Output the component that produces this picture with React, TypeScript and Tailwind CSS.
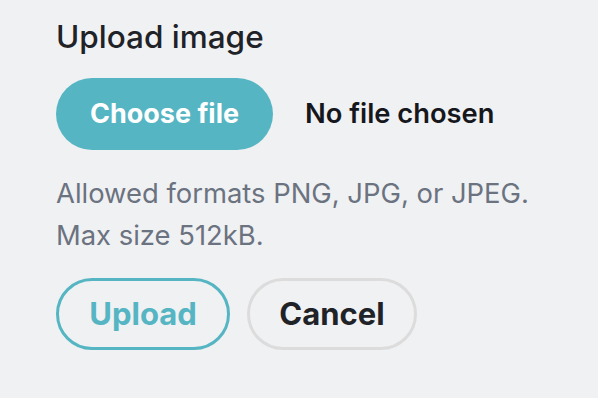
import React from "react";

export default function App() {
  return (
    <div className="w-[598px] h-[398px] bg-[#f0f1f3] overflow-hidden" style={{ fontFamily: "Inter, 'Noto Sans', sans-serif" }}>
      <div className="pl-[56px] pt-[19px]">
        <h1 className="text-[31.5px] leading-[36px] font-medium text-[#1f2227]">Upload image</h1>
        <div className="mt-[23px] flex items-center gap-[32px]">
          <button className="h-[72px] w-[217px] rounded-full bg-[#55b5c3] text-white text-[27px] font-bold">Choose file</button>
          <span className="text-[27.3px] font-semibold text-[#15171c]">No file chosen</span>
        </div>
        <p className="mt-[22px] text-[27.4px] leading-[42px] text-[#6b7280]">
          Allowed formats PNG, JPG, or JPEG.
          <br />
          Max size 512kB.
        </p>
        <div className="mt-[22px] flex gap-[17px]">
          <button className="h-[72px] w-[174px] rounded-full border-[3px] border-[#55b5c3] text-[#55b5c3] text-[31px] font-bold">Upload</button>
          <button className="h-[72px] w-[170px] rounded-full border-[3px] border-[#dcdcdc] text-[#1f2227] text-[31px] font-bold">Cancel</button>
        </div>
      </div>
    </div>
  );
}
